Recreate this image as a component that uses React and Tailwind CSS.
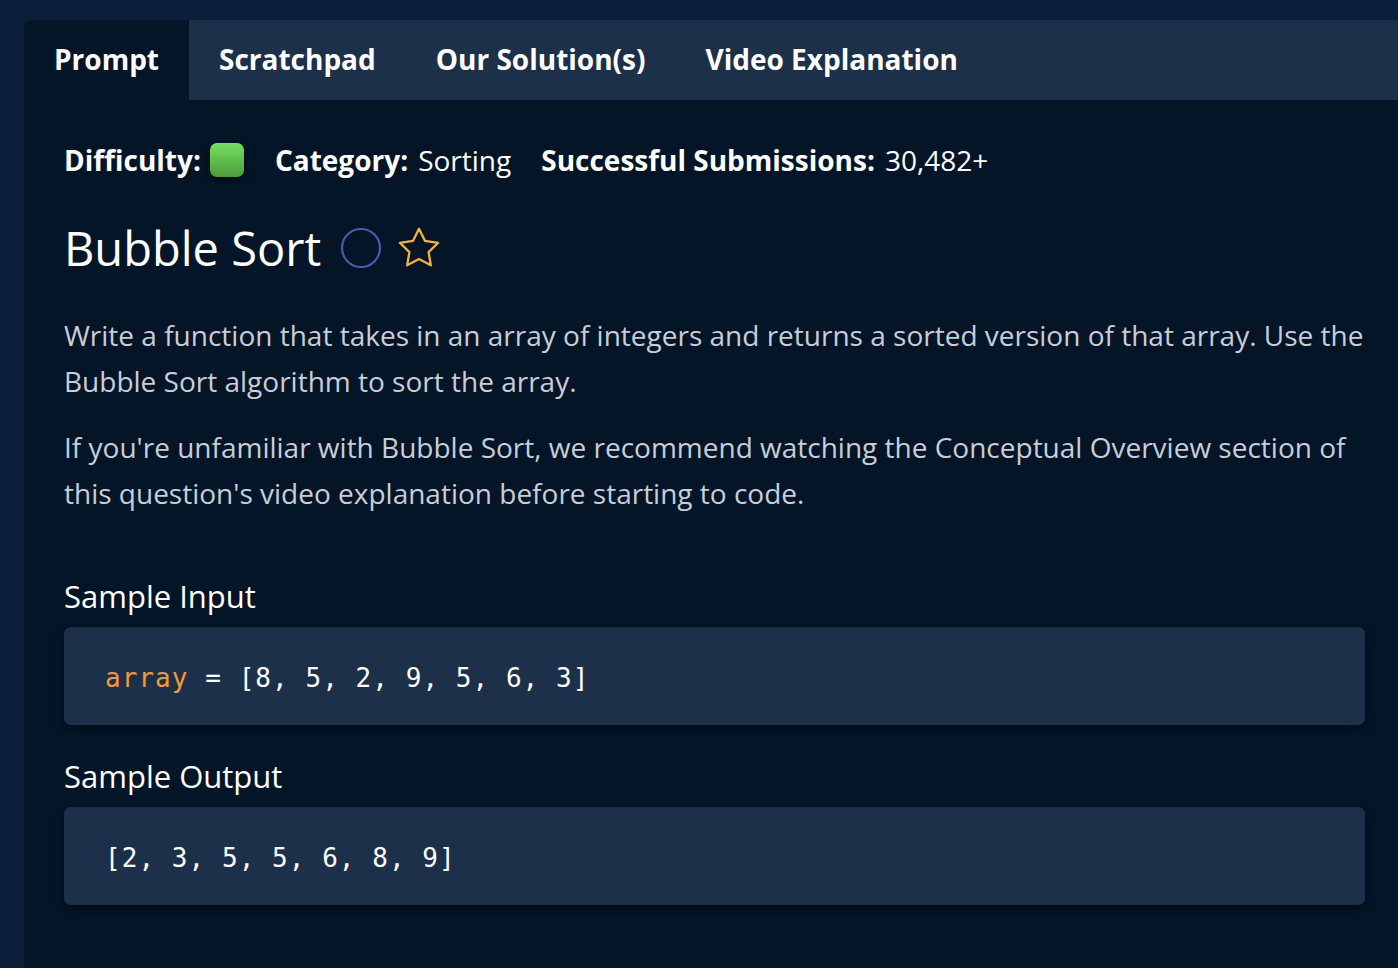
export default function App() {
  const tabs = ["Scratchpad", "Our Solution(s)", "Video Explanation"];
  return (
    <div className="min-h-[968px] w-[1398px] overflow-hidden bg-[#0b1f3b] pt-[20px] pl-[24px]" style={{ fontFamily: '"Open Sans", sans-serif' }}>
      <div className="w-[1381px] min-h-[948px] rounded-tl-[6px] overflow-hidden bg-[#041528]">
        <div className="flex h-[80px] bg-[#1d304a]">
          <div className="flex items-center bg-[#041528] px-[30px] pb-[2px] text-[28px] font-bold text-white">Prompt</div>
          {tabs.map((t) => (
            <div key={t} className="flex items-center px-[30px] pb-[2px] text-[28px] font-bold text-white">{t}</div>
          ))}
        </div>
        <div className="px-[40px] pt-[40px]">
          <div className="flex items-center h-[40px] text-[28px] text-white">
            <span className="font-bold">Difficulty:</span>
            <span className="ml-[9px] inline-block w-[34px] h-[34px] rounded-[7px] bg-gradient-to-b from-[#76e060] to-[#4c9c3b] shadow-[0_3px_6px_rgba(0,0,0,0.5)]"></span>
            <span className="ml-[31px] font-bold">Category:</span>
            <span className="ml-[10px]">Sorting</span>
            <span className="ml-[30px] font-bold">Successful Submissions:</span>
            <span className="ml-[10px]">30,482+</span>
          </div>
          <div className="flex items-center mt-[38px] h-[60px]">
            <h1 className="text-[47px] text-white leading-none">Bubble Sort</h1>
            <svg className="ml-[19px]" width="42" height="42" viewBox="0 0 42 42">
              <circle cx="21" cy="21" r="19" fill="none" stroke="#4b5aa9" strokeWidth="2.2" />
            </svg>
            <svg className="ml-[14px]" width="46" height="46" viewBox="0 0 24 24" fill="none" stroke="#f2b33d" strokeWidth="1.2" strokeLinejoin="round">
              <polygon points="12 2 15.09 8.26 22 9.27 17 14.14 18.18 21.02 12 17.77 5.82 21.02 7 14.14 2 9.27 8.91 8.26 12 2" />
            </svg>
          </div>
          <div className="mt-[34px] text-[28px] leading-[46px] text-[#c8ced7]">
            <p>Write a function that takes in an array of integers and returns a sorted version of that array. Use the Bubble Sort algorithm to sort the array.</p>
            <p className="mt-[20px]">If you're unfamiliar with Bubble Sort, we recommend watching the Conceptual Overview section of this question's video explanation before starting to code.</p>
          </div>
          <h2 className="mt-[57px] text-[31px] leading-[46px] text-white">Sample Input</h2>
          <div className="mt-[8px] h-[98px] rounded-[7px] bg-[#1d304a] shadow-[0_4px_10px_rgba(0,0,0,0.45)] flex items-center pl-[41px] pt-[4px] text-[26px] tracking-[1.05px] text-white" style={{ fontFamily: '"DejaVu Sans Mono", monospace' }}>
            <span className="text-[#f29a3b]">array</span>
            <span className="whitespace-pre"> = [8, 5, 2, 9, 5, 6, 3]</span>
          </div>
          <h2 className="mt-[28px] text-[31px] leading-[46px] text-white">Sample Output</h2>
          <div className="mt-[8px] h-[98px] rounded-[7px] bg-[#1d304a] shadow-[0_4px_10px_rgba(0,0,0,0.45)] flex items-center pl-[41px] pt-[4px] text-[26px] tracking-[1.05px] text-white" style={{ fontFamily: '"DejaVu Sans Mono", monospace' }}>
            <span className="whitespace-pre">[2, 3, 5, 5, 6, 8, 9]</span>
          </div>
        </div>
      </div>
    </div>
  );
}
